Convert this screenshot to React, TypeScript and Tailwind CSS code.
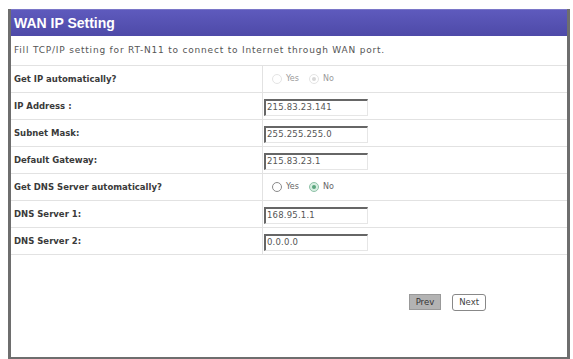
import React from 'react';

const rows: { label: string; kind: 'radio' | 'input'; value?: string; checked?: 'yes' | 'no'; faint?: boolean }[] = [
  { label: 'Get IP automatically?', kind: 'radio', checked: 'no', faint: true },
  { label: 'IP Address :', kind: 'input', value: '215.83.23.141' },
  { label: 'Subnet Mask:', kind: 'input', value: '255.255.255.0' },
  { label: 'Default Gateway:', kind: 'input', value: '215.83.23.1' },
  { label: 'Get DNS Server automatically?', kind: 'radio', checked: 'no' },
  { label: 'DNS Server 1:', kind: 'input', value: '168.95.1.1' },
  { label: 'DNS Server 2:', kind: 'input', value: '0.0.0.0' },
];

const Radio = ({ on, faint }: { on: boolean; faint?: boolean }) => (
  <span
    className={`inline-flex items-center justify-center w-[10px] h-[10px] rounded-full border ${
      faint ? 'border-[#e4e4e4]' : on ? 'border-[#8fc2a8] bg-[#d8eee2]' : 'border-[#8a8a8a]'
    }`}
  >
    {on && <span className={`w-[4px] h-[4px] rounded-full ${faint ? 'bg-[#d8d8d8]' : 'bg-[#5aa57d]'}`} />}
  </span>
);

const App: React.FC = () => {
  return (
    <div className="w-[573px] h-[359px] bg-white pt-[9px] pl-[8px] pr-[3px] overflow-hidden" style={{ fontFamily: '"DejaVu Sans", Verdana, sans-serif' }}>
      <div className="h-[350px] border-l-[3px] border-r-[3px] border-b-2 border-[#6e6e6e] flex flex-col">
        <div className="h-[27px] bg-gradient-to-b from-[#5e5abd] to-[#4e4aa8] flex items-center pl-[3px] border-t border-[#7a76c8]">
          <span className="text-white font-bold text-[14px]" style={{ fontFamily: '"Liberation Sans", Arial, sans-serif' }}>WAN IP Setting</span>
        </div>
        <div className="h-[30px] flex items-center pl-[3px] border-b border-[#e2e2e2]">
          <span className="text-[9px] text-[#555] tracking-[0.8px]">Fill TCP/IP setting for RT-N11 to connect to Internet through WAN port.</span>
        </div>
        <div className="flex flex-col">
          {rows.map((r, i) => (
            <div key={i} className="h-[27px] flex border-b border-[#e2e2e2]">
              <div className="w-[252px] border-r border-[#e2e2e2] flex items-center pl-[3px]">
                <span className="text-[8.5px] font-bold text-[#3a3a3a]">{r.label}</span>
              </div>
              <div className="flex-1 flex items-center pl-[1px]">
                {r.kind === 'input' ? (
                  <div className="w-[104px] h-[17px] border-t-2 border-l-2 border-[#666] border-r border-b border-r-[#e6e6e6] border-b-[#e6e6e6] flex items-center pl-[1px] mt-[2px]">
                    <span className="text-[8.5px] text-[#555] tracking-[0.2px]">{r.value}</span>
                  </div>
                ) : (
                  <div className={`flex items-center gap-[4px] pl-[8px] text-[8px] ${r.faint ? 'text-[#9a9a9a]' : 'text-[#666]'}`}>
                    <Radio on={r.checked === 'yes'} faint={r.faint} />
                    <span className="mr-[6px]">Yes</span>
                    <Radio on={r.checked === 'no'} faint={r.faint} />
                    <span>No</span>
                  </div>
                )}
              </div>
            </div>
          ))}
        </div>
        <div className="flex-1 flex justify-end items-start pr-[81px] pt-[39px] gap-[11px]">
          <button className="h-[16px] px-[6px] bg-[#b3b3b3] border border-[#999] text-[8.5px] text-[#333] leading-none">Prev</button>
          <button className="h-[17px] px-[6px] bg-white border border-[#888] rounded-[3px] text-[8.5px] text-[#444] leading-none">Next</button>
        </div>
      </div>
    </div>
  );
};

export default App;
